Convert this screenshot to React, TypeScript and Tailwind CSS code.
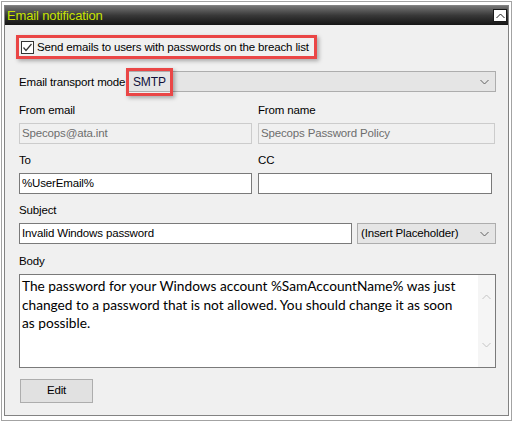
import React from 'react'

const Chevron = ({ up = false, color = '#606060' }: { up?: boolean; color?: string }) => (
   <svg width="9" height="6" viewBox="0 0 9 6" className="block">
      <polyline
         points={up ? '0.5,5 4.5,1 8.5,5' : '0.5,1 4.5,5 8.5,1'}
         fill="none"
         stroke={color}
         strokeWidth="1"
      />
   </svg>
)

const Label = ({ children, className = '' }: { children: React.ReactNode; className?: string }) => (
   <div className={`h-[14px] leading-[14px] text-[#000] ${className}`}>{children}</div>
)

const App = () => {
   return (
      <div className="w-[513px] h-[422px] bg-white pt-px pl-px font-['Liberation_Sans',Arial,sans-serif] text-[11.5px] tracking-[-0.15px]">
         <div className="w-[511px] h-[420px] border border-[#a3a3a3] bg-white pt-[3px] pl-[2px]">
            <div className="w-[505px] h-[411px] border border-[#828282] bg-[#f0f0f0] flex flex-col">
               {/* title bar */}
               <div className="h-[19px] bg-gradient-to-b from-[#767676] via-[#383838] to-[#161616] flex items-center justify-between pl-[2px] pr-px">
                  <span className="text-[13px] leading-[19px] text-[#c8e400]">
                     Email notification
                  </span>
                  <div className="w-[14px] h-[13px] bg-white border border-[#1a1a1a] flex items-center justify-center">
                     <Chevron up color="#202020" />
                  </div>
               </div>

               {/* checkbox highlight */}
               <div className="mt-[10px] ml-[11px] w-[301px] h-[24px] border-[3px] border-[#ea4646] shadow-[2px_2px_4px_rgba(0,0,0,0.3)] flex items-center pl-[2px]">
                  <div className="w-[13px] h-[13px] border border-[#333] bg-white flex items-center justify-center">
                     <svg width="11" height="11" viewBox="0 0 11 11">
                        <polyline points="1.5,5.5 4,8.5 9.5,2" fill="none" stroke="#333" strokeWidth="1.2" />
                     </svg>
                  </div>
                  <span className="ml-[3px] leading-[14px] whitespace-nowrap">
                     Send emails to users with passwords on the breach list
                  </span>
               </div>

               <div className="pl-[14px] flex flex-col">
                  {/* transport mode */}
                  <div className="mt-[12px] flex items-center h-[21px]">
                     <span className="w-[109px] leading-[14px] whitespace-nowrap">Email transport mode</span>
                     <div className="relative w-[368px] h-[21px] bg-[#e5e5e5] border border-[#adadad] flex items-center justify-between pl-[4px] pr-[6px]">
                        <span className="text-[12px] leading-[14px] text-[#10103a]">SMTP</span>
                        <Chevron />
                        <div className="absolute left-[-3px] top-[-4px] w-[47px] h-[28px] border-[3px] border-[#ea4646] shadow-[2px_2px_4px_rgba(0,0,0,0.3)]" />
                     </div>
                  </div>

                  {/* from */}
                  <div className="mt-[11px] flex gap-[6px]">
                     <div className="w-[233px] flex flex-col gap-[6px]">
                        <Label>From email</Label>
                        <div className="h-[21px] border border-[#cccccc] bg-[#f0f0f0] pl-[2px] flex items-center text-[#6d6d6d]">
                           Specops@ata.int
                        </div>
                     </div>
                     <div className="w-[237px] flex flex-col gap-[6px]">
                        <Label>From name</Label>
                        <div className="h-[21px] border border-[#cccccc] bg-[#f0f0f0] pl-[2px] flex items-center text-[#6d6d6d]">
                           Specops Password Policy
                        </div>
                     </div>
                  </div>

                  {/* to / cc */}
                  <div className="mt-[9px] flex gap-[6px]">
                     <div className="w-[233px] flex flex-col gap-[6px]">
                        <Label>To</Label>
                        <div className="h-[21px] border border-[#7a7a7a] bg-white pl-[2px] flex items-center">
                           %UserEmail%
                        </div>
                     </div>
                     <div className="w-[234px] flex flex-col gap-[6px]">
                        <Label>CC</Label>
                        <div className="h-[21px] border border-[#7a7a7a] bg-white" />
                     </div>
                  </div>

                  {/* subject */}
                  <div className="mt-[9px] flex flex-col gap-[6px]">
                     <Label>Subject</Label>
                     <div className="flex gap-[5px]">
                        <div className="w-[333px] h-[21px] border border-[#7a7a7a] bg-white pl-[2px] flex items-center">
                           Invalid Windows password
                        </div>
                        <div className="w-[139px] h-[21px] border border-[#adadad] bg-[#e5e5e5] pl-[3px] pr-[6px] flex items-center justify-between">
                           <span>(Insert Placeholder)</span>
                           <Chevron />
                        </div>
                     </div>
                  </div>

                  {/* body */}
                  <div className="mt-[10px] flex flex-col gap-[6px]">
                     <Label>Body</Label>
                     <div className="w-[477px] h-[94px] border border-[#7a7a7a] bg-white flex">
                        <p className="flex-1 pl-[2px] pt-[2px] pr-[18px] text-[13.7px] tracking-normal leading-[18.5px] text-[#000] font-['Lato','Liberation_Sans',sans-serif]">
                           The password for your Windows account %SamAccountName% was just changed to a password that is not allowed. You should change it as soon as possible.
                        </p>
                        <div className="w-[17px] bg-[#f5f5f5] flex flex-col items-center justify-between py-[19px]">
                           <Chevron up color="#c4c4c4" />
                           <Chevron color="#c4c4c4" />
                        </div>
                     </div>
                  </div>

                  <button className="mt-[11px] ml-px w-[73px] h-[24px] border border-[#adadad] bg-[#e1e1e1] text-[11.5px] text-black">
                     Edit
                  </button>
               </div>
            </div>
         </div>
      </div>
   )
}

export default App
